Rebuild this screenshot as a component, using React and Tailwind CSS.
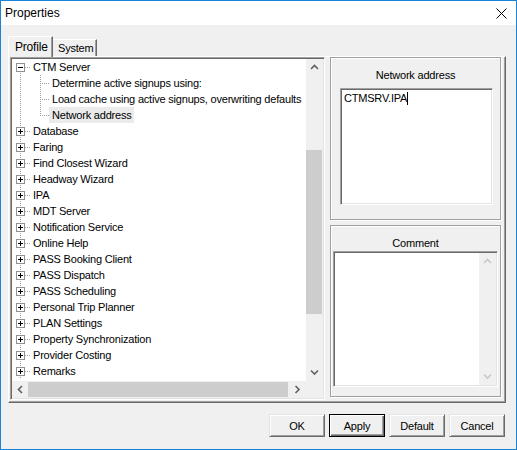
import React from "react";

const treeRows = [
  { label: "CTM Server", kind: "open" },
  { label: "Determine active signups using:", kind: "child" },
  { label: "Load cache using active signups, overwriting defaults", kind: "child" },
  { label: "Network address", kind: "child", last: true, selected: true },
  { label: "Database" },
  { label: "Faring" },
  { label: "Find Closest Wizard" },
  { label: "Headway Wizard" },
  { label: "IPA" },
  { label: "MDT Server" },
  { label: "Notification Service" },
  { label: "Online Help" },
  { label: "PASS Booking Client" },
  { label: "PASS Dispatch" },
  { label: "PASS Scheduling" },
  { label: "Personal Trip Planner" },
  { label: "PLAN Settings" },
  { label: "Property Synchronization" },
  { label: "Provider Costing" },
  { label: "Remarks" },
];

const DOT = "#a0a0a0";

function TreeGutter({ kind, last, first }) {
  if (kind === "child") {
    return (
      <svg width="37" height="16" className="shrink-0" shapeRendering="crispEdges">
        <line x1="8.5" y1="0" x2="8.5" y2="16" stroke={DOT} strokeDasharray="1 1" />
        <line x1="28.5" y1="0" x2="28.5" y2={last ? 9 : 16} stroke={DOT} strokeDasharray="1 1" />
        <line x1="28" y1="8.5" x2="37" y2="8.5" stroke={DOT} strokeDasharray="1 1" />
      </svg>
    );
  }
  return (
    <svg width="18" height="16" className="shrink-0" shapeRendering="crispEdges">
      <line x1="8.5" y1={first ? 8 : 0} x2="8.5" y2="16" stroke={DOT} strokeDasharray="1 1" />
      <line x1="13" y1="8.5" x2="18" y2="8.5" stroke={DOT} strokeDasharray="1 1" />
      <rect x="4.5" y="4.5" width="8" height="8" fill="#ffffff" stroke="#919191" />
      <line x1="6" y1="8.5" x2="11" y2="8.5" stroke="#000000" />
      {kind !== "open" && <line x1="8.5" y1="6" x2="8.5" y2="11" stroke="#000000" />}
    </svg>
  );
}

function Chevron({ dir, color = "#606060" }) {
  const paths = {
    up: "M1 5 L4.5 1.5 L8 5",
    down: "M1 1.5 L4.5 5 L8 1.5",
    left: "M5 1 L1.5 4.5 L5 8",
    right: "M1.5 1 L5 4.5 L1.5 8",
  };
  const horiz = dir === "left" || dir === "right";
  return (
    <svg width={horiz ? 7 : 9} height={horiz ? 9 : 7} viewBox={horiz ? "0 0 7 9" : "0 0 9 7"}>
      <path d={paths[dir]} fill="none" stroke={color} strokeWidth="1.6" />
    </svg>
  );
}

function Sunken({ className = "", children }) {
  return (
    <div
      className={`border border-t-[#a0a0a0] border-l-[#a0a0a0] border-r-white border-b-white p-[1px] shadow-[inset_1px_1px_0_#696969,inset_-1px_-1px_0_#e3e3e3] bg-white ${className}`}
    >
      {children}
    </div>
  );
}

function TreeView() {
  return (
    <Sunken className="w-[315px] h-[343px] flex flex-col">
      <div className="flex h-[322px]">
        <div className="w-[294px] h-full overflow-hidden bg-white">
          {treeRows.map((r, i) => (
            <div key={r.label} className="h-[16px] flex items-center whitespace-nowrap">
              <TreeGutter kind={r.kind || "closed"} last={r.last} first={i === 0} />
              <span
                className={`h-[16px] leading-[16px] pl-[3px] pr-[2px] ${r.selected ? "bg-[#ebebeb]" : ""}`}
              >
                {r.label}
              </span>
            </div>
          ))}
        </div>
        <div className="w-[17px] h-full flex flex-col bg-[#f0f0f0]">
          <div className="h-[17px] flex items-center justify-center">
            <Chevron dir="up" />
          </div>
          <div className="flex-1 pt-[74px]">
            <div className="h-[164px] w-[16px] bg-[#cdcdcd]" />
          </div>
          <div className="h-[17px] flex items-center justify-center">
            <Chevron dir="down" />
          </div>
        </div>
      </div>
      <div className="flex h-[17px]">
        <div className="w-[294px] flex bg-[#f0f0f0]">
          <div className="w-[16px] flex items-center justify-center">
            <Chevron dir="left" />
          </div>
          <div className="flex-1 py-[1px]">
            <div className="h-full w-[260px] bg-[#cdcdcd]" />
          </div>
          <div className="w-[17px] flex items-center justify-center">
            <Chevron dir="right" />
          </div>
        </div>
        <div className="w-[17px] bg-[#f0f0f0]" />
      </div>
    </Sunken>
  );
}

function GroupBox({ className = "", children }) {
  return (
    <div
      className={`w-[171px] border border-[#a0a0a0] shadow-[inset_1px_1px_0_#ffffff,1px_1px_0_#ffffff] flex flex-col ${className}`}
    >
      {children}
    </div>
  );
}

function Button({ children, isDefault }) {
  return (
    <button
      className={
        isDefault
          ? "w-[56px] h-[23px] bg-[#f0f0f0] border border-black shadow-[inset_1px_1px_0_#ffffff,inset_-1px_-1px_0_#696969,inset_-2px_-2px_0_#a0a0a0] text-[11px] leading-[14px] text-black"
          : "w-[56px] h-[23px] bg-[#f0f0f0] border border-t-[#e3e3e3] border-l-[#e3e3e3] border-r-[#696969] border-b-[#696969] shadow-[inset_1px_1px_0_#ffffff,inset_-1px_-1px_0_#a0a0a0] text-[11px] leading-[14px] text-black"
      }
    >
      {children}
    </button>
  );
}

export default function App() {
  return (
    <div className="w-[517px] h-[450px] border border-[#1883d7] bg-[#f0f0f0] flex flex-col font-['Liberation_Sans',Arial,sans-serif] text-[11px] tracking-[-0.2px] text-black select-none overflow-hidden">
      {/* title bar */}
      <div className="h-[24px] shrink-0 bg-white flex items-center justify-between pl-[4px] pr-[9px]">
        <span className="text-[12px] tracking-normal">Properties</span>
        <svg width="11" height="11" viewBox="0 0 11 11">
          <path d="M0.5 0.5 L10.5 10.5 M10.5 0.5 L0.5 10.5" stroke="#000" strokeWidth="1" fill="none" />
        </svg>
      </div>

      {/* dialog body */}
      <div className="flex-1 flex flex-col pl-[7px] pr-[10px] pt-[11px]">
        {/* tabs */}
        <div className="flex items-end h-[20px]">
          <div className="relative z-10 w-[45px] h-[21px] -mb-[1px] bg-[#f0f0f0] border-t border-l border-white border-r border-r-[#696969] shadow-[inset_-1px_0_0_#a0a0a0] flex items-center pl-[6px] text-[12px]">
            Profile
          </div>
          <div className="w-[44px] h-[17px] bg-[#f0f0f0] border-t border-white border-r border-r-[#696969] shadow-[inset_-1px_0_0_#a0a0a0] flex items-center pl-[5px]">
            System
          </div>
        </div>

        {/* tab page */}
        <div className="h-[347px] border-t border-l border-white border-r border-b border-r-[#696969] border-b-[#696969] shadow-[inset_-1px_-1px_0_#a0a0a0] pl-[1px] pr-[4px] pb-[2px] flex gap-[5px]">
          <TreeView />
          <div className="flex flex-col gap-[5px]">
            <GroupBox className="h-[163px]">
              <div className="mt-[10px] h-[14px] leading-[14px] text-center">Network address</div>
              <Sunken className="mt-[6px] ml-[9px] w-[153px] h-[117px]">
                <div className="pl-[2px] pt-[1px] leading-[14px] flex items-start">
                  <span>CTMSRV.IPA</span>
                  <span className="inline-block w-[1px] h-[13px] bg-black mt-[1px]" />
                </div>
              </Sunken>
            </GroupBox>
            <GroupBox className="h-[172px]">
              <div className="mt-[10px] h-[14px] leading-[14px] text-center">Comment</div>
              <Sunken className="mt-[1px] ml-[2px] w-[165px] h-[136px] flex justify-end">
                <div className="w-[17px] h-full bg-[#f0f0f0] flex flex-col justify-between">
                  <div className="h-[17px] flex items-center justify-center">
                    <Chevron dir="up" color="#c8c8c8" />
                  </div>
                  <div className="h-[17px] flex items-center justify-center">
                    <Chevron dir="down" color="#c8c8c8" />
                  </div>
                </div>
              </Sunken>
            </GroupBox>
          </div>
        </div>

        {/* dialog buttons */}
        <div className="mt-[11px] flex justify-end gap-[4px] pr-[1px]">
          <Button>OK</Button>
          <Button isDefault>Apply</Button>
          <Button>Default</Button>
          <Button>Cancel</Button>
        </div>
      </div>
    </div>
  );
}
